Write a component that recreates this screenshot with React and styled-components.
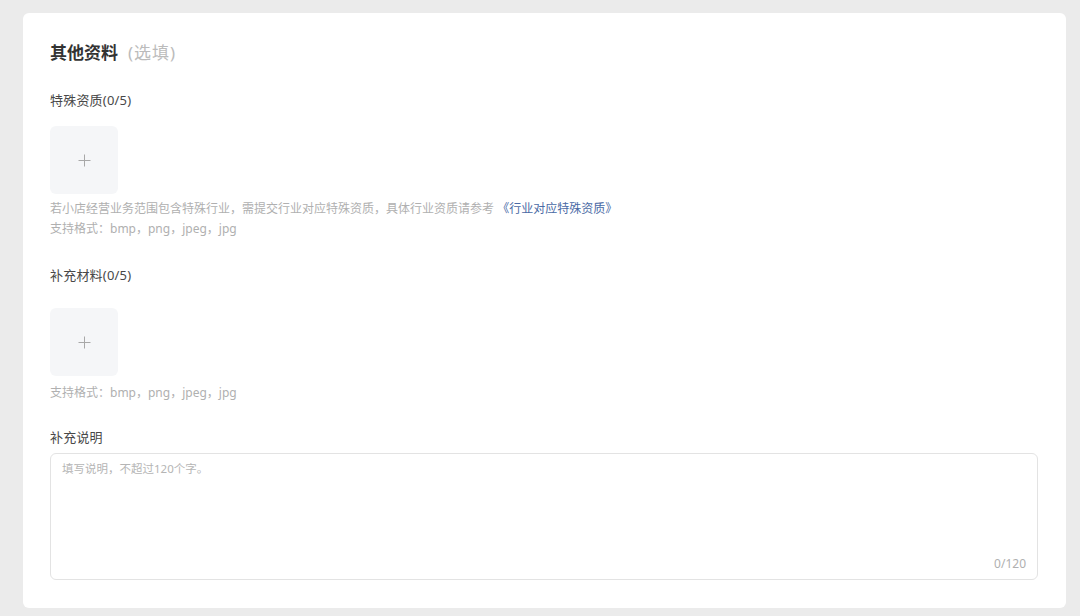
import React from 'react';
import styled, { createGlobalStyle } from 'styled-components';

const GlobalStyle = createGlobalStyle`
  html, body {
    margin: 0;
    background: #ebebeb;
  }
  body {
    padding: 13px 14px 8px 23px;
    font-family: "Noto Sans", "Noto Sans CJK SC", sans-serif;
    color: #333;
  }
  * { box-sizing: border-box; }
`;

const Card = styled.section`
  background: #fff;
  border-radius: 6px;
  padding: 28px 28px 28px 27px;
  display: flex;
  flex-direction: column;
`;

const Title = styled.h2`
  margin: 0;
  font-size: 17px;
  line-height: 24px;
  font-weight: 700;
  color: #333;
`;

const Optional = styled.span`
  font-weight: 400;
  color: #bbb;
  margin-left: 10px;
  letter-spacing: 1px;
`;

const Label = styled.div`
  font-size: 13px;
  line-height: 20px;
  color: #484848;
  letter-spacing: 0.2px;
  margin-top: ${({ $top }) => $top}px;
  margin-bottom: ${({ $bottom }) => $bottom}px;
`;

const Upload = styled.button`
  width: 68px;
  height: 68px;
  border: none;
  border-radius: 6px;
  background: #f5f6f8;
  display: flex;
  align-items: center;
  justify-content: center;
  padding: 0;
  cursor: pointer;
`;

const Hint = styled.div`
  font-size: 12px;
  line-height: 20px;
  color: #b0b0b0;
  margin-top: ${({ $top }) => $top}px;
`;

const Link = styled.a`
  color: #4a6aa5;
  text-decoration: none;
`;

const TextBox = styled.div`
  position: relative;
  height: 127px;
  border: 1px solid #e3e3e3;
  border-radius: 6px;
`;

const Area = styled.textarea`
  width: 100%;
  height: 100%;
  border: none;
  outline: none;
  resize: none;
  background: transparent;
  padding: 6px 11px;
  font-family: inherit;
  font-size: 11.5px;
  line-height: 18px;
  color: #333;
  &::placeholder { color: #b5b5b5; }
`;

const Counter = styled.span`
  position: absolute;
  right: 11px;
  bottom: 7px;
  font-size: 12px;
  color: #b0b0b0;
`;

const Plus = () => (
  <svg width="13" height="13" viewBox="0 0 13 13">
    <path d="M6.5 0.5v12M0.5 6.5h12" stroke="#a8a8a8" strokeWidth="1" fill="none" />
  </svg>
);

const FORMATS = '支持格式：bmp，png，jpeg，jpg';

export default function App() {
  return (
    <>
      <GlobalStyle />
      <Card>
        <Title>
          其他资料<Optional>(选填)</Optional>
        </Title>

        <Label $top={25} $bottom={16}>特殊资质(0/5)</Label>
        <Upload aria-label="上传特殊资质"><Plus /></Upload>
        <Hint $top={5}>
          若小店经营业务范围包含特殊行业，需提交行业对应特殊资质，具体行业资质请参考 <Link href="#">《行业对应特殊资质》</Link>
          <br />
          {FORMATS}
        </Hint>

        <Label $top={26} $bottom={23}>补充材料(0/5)</Label>
        <Upload aria-label="上传补充材料"><Plus /></Upload>
        <Hint $top={7}>{FORMATS}</Hint>

        <Label $top={24} $bottom={6}>补充说明</Label>
        <TextBox>
          <Area placeholder="填写说明，不超过120个字。" maxLength={120} />
          <Counter>0/120</Counter>
        </TextBox>
      </Card>
    </>
  );
}
